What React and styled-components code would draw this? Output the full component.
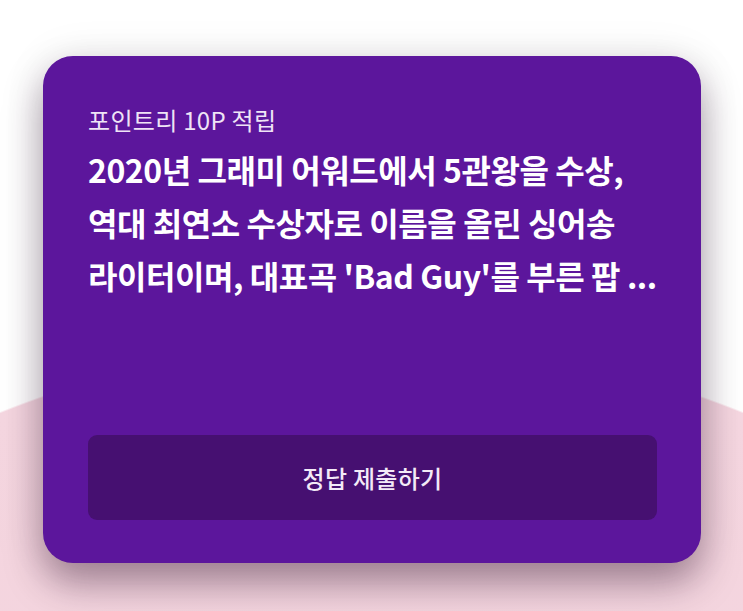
import React from 'react';
import styled, { createGlobalStyle } from 'styled-components';

const GlobalStyle = createGlobalStyle`
  html, body {
    margin: 0;
    padding: 0;
    background: #ffffff;
  }
  body {
    font-family: 'Noto Sans CJK KR', 'Noto Sans', sans-serif;
  }
`;

const Stage = styled.div`
  width: 743px;
  height: 611px;
  overflow: hidden;
  box-sizing: border-box;
  padding: 56px 42px 0 43px;
  background:
    radial-gradient(circle 1000px at 50% 1340px, #f0d0d9 0, #f5d6e0 99.8%, rgba(255, 255, 255, 0) 100%),
    #ffffff;
`;

const Card = styled.section`
  height: 507px;
  box-sizing: border-box;
  padding: 49px 44px 43px 45px;
  border-radius: 30px;
  background: #5c169c;
  box-shadow: 0 20px 38px rgba(40, 10, 40, 0.4), 0 0 44px rgba(0, 0, 0, 0.08);
  display: flex;
  flex-direction: column;
`;

const Reward = styled.div`
  font-size: 24px;
  line-height: 30px;
  font-weight: 400;
  color: #efe4f6;
  letter-spacing: 0.3px;
`;

const Question = styled.p`
  margin: 8px 0 0;
  font-size: 32px;
  line-height: 53px;
  font-weight: 700;
  color: #ffffff;
  letter-spacing: -0.45px;
  white-space: nowrap;
`;

const Line = styled.span`
  display: block;
`;

const Spacer = styled.div`
  flex: 1;
`;

const SubmitButton = styled.button`
  height: 85px;
  width: 100%;
  border: none;
  border-radius: 9px;
  background: #461071;
  color: #f3eaf7;
  font-family: inherit;
  font-size: 24px;
  font-weight: 500;
  letter-spacing: 0.3px;
  cursor: pointer;
`;

const lines = [
  '2020년 그래미 어워드에서 5관왕을 수상,',
  '역대 최연소 수상자로 이름을 올린 싱어송',
  "라이터이며, 대표곡 'Bad Guy'를 부른 팝 ...",
];

export default function App() {
  return (
    <>
      <GlobalStyle />
      <Stage>
        <Card>
          <Reward>포인트리 10P 적립</Reward>
          <Question>
            {lines.map((l) => (
              <Line key={l}>{l}</Line>
            ))}
          </Question>
          <Spacer />
          <SubmitButton>정답 제출하기</SubmitButton>
        </Card>
      </Stage>
    </>
  );
}
